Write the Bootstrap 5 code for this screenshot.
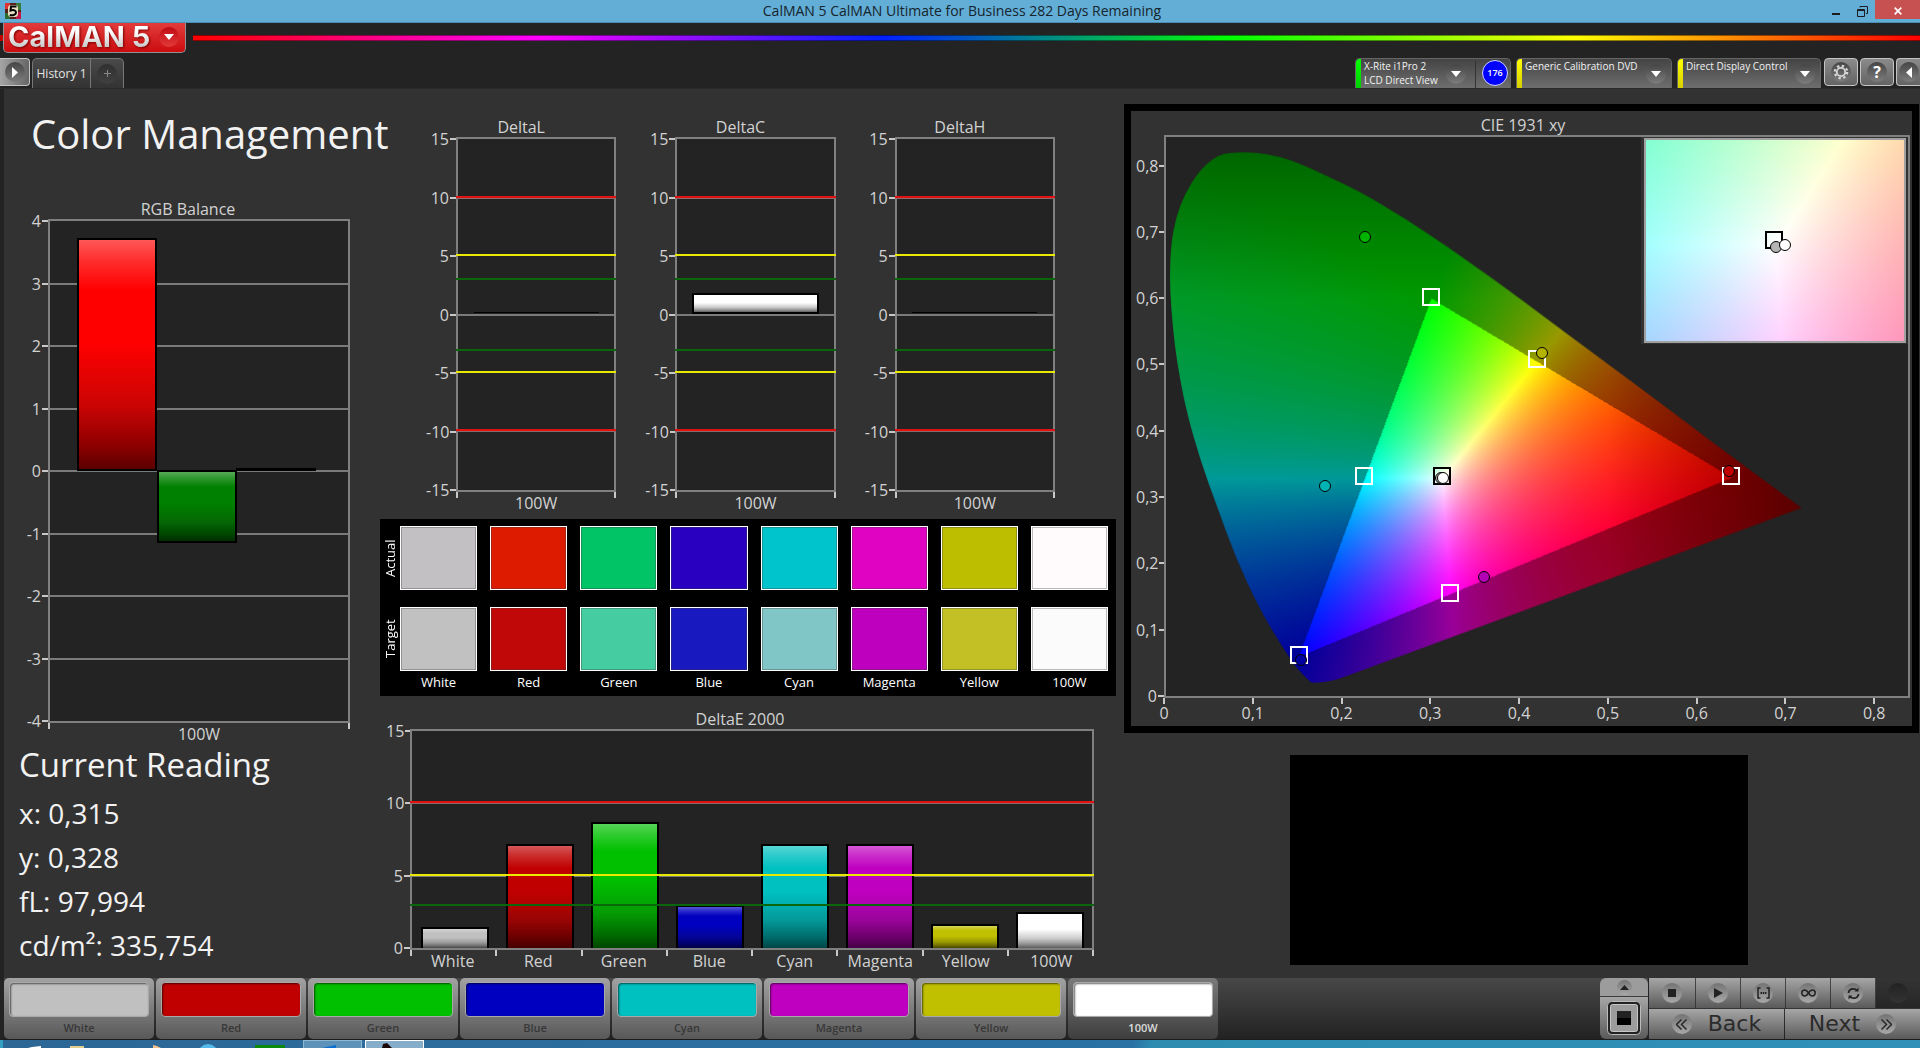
<!DOCTYPE html>
<html lang="en">
<head>
<meta charset="utf-8">
<meta name="viewport" content="width=device-width, initial-scale=1">
<title>CalMAN 5</title>
<link href="https://cdn.jsdelivr.net/npm/bootstrap@5.3.0/dist/css/bootstrap.min.css" rel="stylesheet">
<style>
  body { font-family: "Open Sans", "Noto Sans", sans-serif; background: #323232; color: #d2d2d2; font-size: 16px; line-height: 20px; }
  button { font-family: inherit; }
  .titlebar { height: 23px; background: #62aed6; border-bottom: 1px solid #4b8fb4; color: #16242c; font-size: 14px; }
  .titlebar .app-icon { width: 16px; height: 16px; margin-left: 5px; }
  .titlebar .caption-text { padding-left: 80px; }
  .win-btn { border: 0; background: transparent; height: 19px; width: 26px; padding: 0; color: #1c1c1c; }
  .win-close { background: #c75050; width: 45px; color: #fff; }

  .topbar { height: 66px; background: #232323; border-bottom: 1px solid #2a2a2a; }
  .brand-row { height: 35px; gap: 7px; }
  .brand-lead { width: 3px; margin: 12px -7px 0 0; height: 6px; background: #c40000; }
  .brand { width: 183px; height: 30px; padding: 0 0 2px 4px; border: 1px solid #909090; border-top: 0; border-radius: 0 0 5px 5px; background: linear-gradient(#e23c3c, #cc0c0f); }
  .brand-name { font-family: Inter, "Liberation Sans", sans-serif; font-weight: 700; font-size: 29px; line-height: 28px; color: transparent; background: linear-gradient(#fff 30%, #c9c9c9 85%); -webkit-background-clip: text; background-clip: text; filter: drop-shadow(1px 1px 1px #7a0000); white-space: nowrap; flex: 1 1 0; text-align: left; }
  .brand-arrow { width: 20px; height: 20px; border-radius: 50%; background: linear-gradient(#c00a14, #e23a3a); margin-right: 6px; }
  .spectrum { height: 6px; margin-top: 12px; border: 1px solid #00000070; border-width: 1px 0; background: linear-gradient(90deg, #f00 0, #f0f 20%, #0020ff 40%, #0f0 60%, #ff0 80%, #f00 100%); }
  .round-knob { width: 20px; height: 20px; border-radius: 50%; background: linear-gradient(#454545, #7d7d7d); flex: none; display: flex; align-items: center; justify-content: center; }
  .metal { border: 1px solid #c4c4c4; border-radius: 4px; background: linear-gradient(#8b8b8b, #646464); padding: 0; height: 28px; width: 34px; display: flex; align-items: center; justify-content: center; margin-left: 2px; }
  .metal-open { width: 30px; margin-left: 0; border-left: 0; border-radius: 0 4px 4px 0; background: linear-gradient(90deg, #a5a5a5, #666); }
  .metal-cut { width: 24px; border-right: 0; border-radius: 4px 0 0 4px; }
  .htab { height: 30px; border: 1px solid #777; border-bottom: 0; background: linear-gradient(#4a4a4a, #333); color: #e4e4e4; font-size: 12px; padding: 0; }
  .htab-name { width: 59px; border-radius: 5px 0 0 0; margin-left: 2px; }
  .htab-add { width: 33px; border-left: 0; border-radius: 0 5px 0 0; color: #8a8a8a; }
  .htab-add .round-knob { background: linear-gradient(#303030, #404040); }
  .source { height: 30px; border: 1px solid #666; border-bottom: 0; border-radius: 5px 5px 0 0; background: linear-gradient(#444, #6e6e6e); color: #f2f2f2; font-size: 10px; font-weight: 500; line-height: 14px; padding: 0; text-align: left; overflow: hidden; display: flex; width: 156px; margin-right: 5px; }
  .source-last { width: 144px; margin-right: 1px; }
  .source .strip { width: 5px; align-self: stretch; background: linear-gradient(#ff0, #d6cf00); flex: none; }
  .source .strip.ok { background: linear-gradient(#0f0, #00d200); }
  .source .txt { padding-left: 3px; flex: 1 1 0; min-width: 0; white-space: nowrap; }
  .source .round-knob { align-self: center; margin-right: 5px; }
  .count { width: 26px; height: 26px; border-radius: 50%; border: 1px solid #cfd3ff; background: #00f; color: #fff; font-size: 9px; font-weight: 600; display: flex; align-items: center; justify-content: center; margin: 1px 2px 0 6px; flex: none; }
  .source .rule { width: 1px; background: #333; margin-top: 2px; }

  .workspace { display: grid; grid-template-columns: minmax(0, 376fr) minmax(0, 740fr) minmax(0, 800fr); border-left: 4px solid #232323; }
  .pane-left { padding: 21px 30px 9px 22px; }
  h1.page-name { font-size: 40px; line-height: 48px; font-weight: 400; color: #f2f2f2; margin: 0 0 41px 5px; white-space: nowrap; }
  .reading { color: #f2f2f2; margin: 0 0 0 -7px; }
  .reading h2 { font-size: 33px; line-height: 40px; font-weight: 400; margin: 0 0 8px; }
  .reading p { font-size: 28px; line-height: 40px; margin: 0 0 4px; }

  .chart-title { text-align: center; height: 20px; }
  .yaxis { flex: none; padding: 2px 0; display: flex; flex-direction: column; }
  .yaxis .marks { flex: 1 1 0; display: flex; flex-direction: column; justify-content: space-between; }
  .yaxis .marks div { height: 20px; margin: -10px 0; display: flex; align-items: center; justify-content: flex-end; }
  .yaxis .marks div::after { content: ""; width: 6px; height: 2px; background: #c8c8c8; margin-left: 1px; }
  .plot { flex: 1 1 0; position: relative; border: 2px solid #808080; background: #232323; }
  .gline { position: absolute; left: 0; right: 0; height: 2px; margin-top: -1px; background: #7a7a7a; }
  .limit { position: absolute; left: -2px; right: -2px; height: 2px; margin-top: -2px; }
  .limit-r { background: #e01212; box-shadow: 0 1px #8a6a6a; }
  .limit-y { background: #e8e800; }
  .limit-g { background: #0a660a; margin-top: -1px; }
  .xticks { height: 6px; margin-bottom: -6px; display: flex; justify-content: space-between; }
  .xticks i { width: 2px; background: #c8c8c8; }
  .xlabels { height: 22px; display: flex; line-height: 22px; text-align: center; }
  .xlabels span { flex: 1 1 0; }
  .vbar { border: 2px solid #000; background-image: linear-gradient(rgba(255,255,255,.34), rgba(255,255,255,.18) 9%, rgba(255,255,255,0) 22%, rgba(0,0,0,0) 45%, rgba(20,20,20,.22) 72%, rgba(0,0,0,.42) 88%, rgba(0,0,0,.64)); }
  .slots { position: absolute; inset: 0; display: flex; align-items: flex-end; justify-content: space-around; }
  .slots .vbar { width: 10%; border-bottom: 0; }
  .w-rgb { width: 22px; } .w-delta { width: 30px; } .w-de { width: 24px; } .w-cie { width: 28px; }
  .ml-rgb { margin-left: 22px; } .ml-delta { margin-left: 30px; } .ml-de { margin-left: 24px; } .ml-cie { margin-left: 28px; }

  .deltas { padding: 28px 65px 5px 46px; gap: 29px; flex: 1 1 0; }
  .chips { background: #000; height: 177px; margin-right: 4px; padding: 7px 8px 0 2px; color: #fff; font-size: 13px; display: grid; grid-template-columns: 5px repeat(8, 1fr); grid-template-rows: 64px 64px 24px; row-gap: 17px; column-gap: 13px; text-align: center; }
  .chips .side { writing-mode: vertical-rl; rotate: 180deg; font-size: 13px; width: 16px; text-align: center; line-height: 16px; }
  .chips .chip { border: 1px solid #fff; box-shadow: inset 0 0 0 1px rgba(60,60,60,.35); }
  .chips .cap { margin-top: -16px; line-height: 20px; }
  .de-pane { height: 282px; padding: 13px 26px 6px 6px; }

  .pane-right { padding: 15px 1px 13px 4px; }
  .cie { background: #323232; border: 7px solid #000; padding: 4px 2px 3px 5px; flex: 1 1 0; }
  .cie canvas { display: block; width: 100%; height: 100%; }
  .pt, .sq { position: absolute; translate: -50% -50%; }
  .pt { width: 12px; height: 12px; border-radius: 50%; border: 1px solid #000; }
  .sq { width: 18px; height: 18px; border: 2px solid #fff; }
  .sq.dark { border-color: #000; }
  .inset-box { position: absolute; top: 0; right: 0; width: 36%; height: 37%; background: #323232; padding: 1px 2px 1px 3px; }
  .inset-in { position: relative; width: 100%; height: 100%; border: 2px solid #a0a0a0; }
  .blackout { background: #000; height: 210px; width: 458px; margin: 22px auto 0; translate: -3px; }
  .cie-x { display: flex; justify-content: space-between; width: 95.2%; padding-top: 6px; height: 25px; }
  .cie-x span { width: 0; display: flex; flex-direction: column; align-items: center; line-height: 18px; }
  .cie-x span::before { content: ""; width: 2px; height: 6px; margin-top: -6px; background: #c8c8c8; flex: none; }

  .bottombar { height: 62px; border-left: 4px solid #232323; border-bottom: 1px solid #1c1c1c; background: linear-gradient(#484848, #222); }
  .patch { width: 150px; margin-right: 2px; border: 0; border-radius: 5px; padding: 4px 5px 0; background: linear-gradient(#a2a2a2, #585858); color: #383838; font-size: 11px; font-weight: 600; line-height: 22px; display: flex; flex-direction: column; }
  .patch i { height: 38px; border-radius: 4px; border: 1px solid #a9a9a9; width: 100%; box-shadow: inset 1px 1px 2px rgba(0,0,0,.6); }
  .patch span { width: 100%; text-align: center; }
  .patch.on { background: linear-gradient(#7a7a7a, #3e3e3e); color: #dcdcdc; }
  .pads { width: 320px; display: grid; grid-template-columns: 48px 272px; }
  .pad-col { display: flex; flex-direction: column; gap: 1px; }
  .pad { border: 0; padding: 0; background: linear-gradient(#a6a6a6, #5a5a5a); display: flex; align-items: center; justify-content: center; color: #2b2b2b; }
  .pad .round-knob { background: linear-gradient(#747474, #a8a8a8); }
  .pad-up { height: 18px; background: #9c9c9c; }
  .pad-up .round-knob { width: 15px; height: 15px; }
  .pad.off { background: linear-gradient(#343434, #262626); }
  .pad.off .round-knob { background: linear-gradient(#222, #333); }
  .pad-top { display: grid; gap: 1px; grid-template-columns: 46px repeat(5, 1fr); height: 30px; }
  .pad-bottom { display: grid; gap: 1px; grid-template-columns: 1fr 1fr; flex: 1 1 0; }
  .pad-nav { font-family: "DejaVu Sans", sans-serif; font-size: 22px; line-height: 30px; gap: 16px; }
  .taskbar { height: 8px; overflow: hidden; background: linear-gradient(100deg, #2c6796 0, #2a72a4 59%, #2d8cb0 60%, #3190b8 100%); }
  .tb-item { width: 59px; margin-right: 3px; border: 1px solid #8db8d4; border-bottom: 0; background: #5d93b8; }
  .tb-item.now { border-color: #fff; background: #86aecb; }
</style>
</head>
<body class="d-flex flex-column min-vh-100 m-0">

<header class="titlebar d-flex align-items-start">
  <svg class="app-icon align-self-center" viewBox="0 0 16 16" aria-hidden="true"><rect width="16" height="16" fill="#5c1f18"/><rect width="5" height="6" fill="#d33"/><rect x="11" width="5" height="7" fill="#3a7a3a"/><rect y="10" width="5" height="6" fill="#2c6a30"/><rect x="11" y="9" width="5" height="7" fill="#c01848"/><rect x="3" y="2" width="10" height="12" rx="3" fill="#e6dcc0"/><path d="M11.500 3.500H6L5.500 7.500C9 6.500 11 7.500 11 9.500S8 13 4.800 12" fill="none" stroke="#000" stroke-width="2"/></svg>
  <div class="caption-text flex-grow-1 text-center align-self-center">CalMAN 5 CalMAN Ultimate for Business 282 Days Remaining</div>
  <button class="win-btn" aria-label="Minimize"><svg width="8" height="14" viewBox="0 0 8 14"><rect y="9" width="8" height="2" fill="#1c1c1c"/></svg></button>
  <button class="win-btn" aria-label="Restore"><svg width="11" height="11" viewBox="0 0 11 11" fill="none" stroke="#1c1c1c"><path d="M.5 3.500h7v7h-7zM.5 4.500h7M3 1.500V.5h7.500v7H9"/></svg></button>
  <button class="win-btn win-close" aria-label="Close"><svg width="8" height="8" viewBox="0 0 8 8" stroke="#fff" stroke-width="1.700"><path d="M.7.700l6.600 6.600M7.300.700L.7 7.300"/></svg></button>
</header>

<div class="topbar">
  <div class="brand-row d-flex align-items-start">
    <div class="brand-lead"></div>
    <button class="brand d-flex align-items-center" aria-label="CalMAN 5 menu"><span class="brand-name">CalMAN 5</span><span class="brand-arrow d-flex align-items-center justify-content-center"><svg width="10" height="6" viewBox="0 0 10 6"><path d="M0 0h10L5 6z" fill="#fff"/></svg></span></button>
    <div class="spectrum flex-grow-1"></div>
  </div>
  <div class="d-flex align-items-start">
    <button class="metal metal-open" aria-label="Open panel"><span class="round-knob"><svg width="6" height="11" viewBox="0 0 6 11"><path d="M0 0l6 5.500L0 11z" fill="#fff"/></svg></span></button>
    <button class="htab htab-name">History 1</button>
    <button class="htab htab-add d-flex align-items-center justify-content-center" aria-label="Add history"><span class="round-knob"><svg width="7" height="7" viewBox="0 0 7 7" stroke="#8a8a8a"><path d="M3.500 0v7M0 3.500h7"/></svg></span></button>
    <div class="flex-grow-1"></div>
    <button class="source"><span class="strip ok"></span><span class="txt">X-Rite i1Pro 2<br>LCD Direct View</span><span class="round-knob"><svg width="10" height="6" viewBox="0 0 10 6"><path d="M0 0h10L5 6z" fill="#fff"/></svg></span><span class="rule align-self-stretch ms-1"></span><span class="count">176</span></button>
    <button class="source"><span class="strip"></span><span class="txt">Generic Calibration DVD</span><span class="round-knob"><svg width="10" height="6" viewBox="0 0 10 6"><path d="M0 0h10L5 6z" fill="#fff"/></svg></span></button>
    <button class="source source-last"><span class="strip"></span><span class="txt">Direct Display Control</span><span class="round-knob"><svg width="10" height="6" viewBox="0 0 10 6"><path d="M0 0h10L5 6z" fill="#fff"/></svg></span></button>
    <button class="metal" aria-label="Settings"><span class="round-knob"><svg width="16" height="16" viewBox="0 0 16 16" fill="none" stroke="#d8d8d8"><circle cx="8" cy="8" r="4.200" stroke-width="1.800"/><circle cx="8" cy="8" r="6.200" stroke-width="2.200" stroke-dasharray="2.400 2.470"/></svg></span></button>
    <button class="metal" aria-label="Help"><span class="round-knob fw-bold text-white">?</span></button>
    <button class="metal metal-cut" aria-label="Collapse"><span class="round-knob"><svg width="6" height="11" viewBox="0 0 6 11"><path d="M6 0L0 5.500 6 11z" fill="#fff"/></svg></span></button>
  </div>
</div>

<main class="workspace flex-grow-1">
  <section class="pane-left d-flex flex-column">
    <h1 class="page-name">Color Management</h1>
    <div class="chart-title">RGB Balance</div>
    <div class="d-flex flex-grow-1">
      <div class="yaxis w-rgb"><div class="marks"><div>4</div><div>3</div><div>2</div><div>1</div><div>0</div><div>-1</div><div>-2</div><div>-3</div><div>-4</div></div></div>
      <div class="plot">
        <div class="gline" style="top:12.500%"></div><div class="gline" style="top:25%"></div><div class="gline" style="top:37.500%"></div><div class="gline" style="top:50%"></div><div class="gline" style="top:62.500%"></div><div class="gline" style="top:75%"></div><div class="gline" style="top:87.500%"></div>
        <div class="vbar position-absolute" style="left:9.200%;width:26.800%;top:3.400%;height:46.600%;background-color:#f00"></div>
        <div class="vbar position-absolute" style="left:35.800%;width:26.800%;top:49.800%;height:14.600%;background-color:#008000"></div>
        <div class="bg-black position-absolute" style="left:62.400%;width:26.800%;top:49.400%;height:.6%"></div>
      </div>
    </div>
    <div class="xticks ml-rgb"><i></i><i></i></div>
    <div class="xlabels ml-rgb"><span>100W</span></div>
    <div class="reading">
      <h2>Current Reading</h2>
      <p>x: 0,315</p><p>y: 0,328</p><p>fL: 97,994</p><p>cd/m²: 335,754</p>
    </div>
  </section>

  <section class="d-flex flex-column">
    <div class="deltas d-flex">
      <div class="d-flex flex-column flex-fill">
        <div class="chart-title">DeltaL</div>
        <div class="d-flex flex-grow-1">
          <div class="yaxis w-delta"><div class="marks"><div>15</div><div>10</div><div>5</div><div>0</div><div>-5</div><div>-10</div><div>-15</div></div></div>
          <div class="plot"><div class="gline" style="top:50%"></div><div class="bg-black position-absolute" style="left:10%;width:80%;top:49.200%;height:.5%"></div>
            <div class="limit limit-r" style="top:16.670%"></div><div class="limit limit-y" style="top:33.330%"></div><div class="limit limit-g" style="top:40%"></div><div class="limit limit-g" style="top:60%"></div><div class="limit limit-y" style="top:66.670%"></div><div class="limit limit-r" style="top:83.330%"></div></div>
        </div>
        <div class="xticks ml-delta"><i></i><i></i></div>
        <div class="xlabels ml-delta"><span>100W</span></div>
      </div>
      <div class="d-flex flex-column flex-fill">
        <div class="chart-title">DeltaC</div>
        <div class="d-flex flex-grow-1">
          <div class="yaxis w-delta"><div class="marks"><div>15</div><div>10</div><div>5</div><div>0</div><div>-5</div><div>-10</div><div>-15</div></div></div>
          <div class="plot"><div class="gline" style="top:50%"></div><div class="vbar position-absolute" style="left:9.500%;width:81%;top:44%;height:6%;background-color:#fff"></div>
            <div class="limit limit-r" style="top:16.670%"></div><div class="limit limit-y" style="top:33.330%"></div><div class="limit limit-g" style="top:40%"></div><div class="limit limit-g" style="top:60%"></div><div class="limit limit-y" style="top:66.670%"></div><div class="limit limit-r" style="top:83.330%"></div></div>
        </div>
        <div class="xticks ml-delta"><i></i><i></i></div>
        <div class="xlabels ml-delta"><span>100W</span></div>
      </div>
      <div class="d-flex flex-column flex-fill">
        <div class="chart-title">DeltaH</div>
        <div class="d-flex flex-grow-1">
          <div class="yaxis w-delta"><div class="marks"><div>15</div><div>10</div><div>5</div><div>0</div><div>-5</div><div>-10</div><div>-15</div></div></div>
          <div class="plot"><div class="gline" style="top:50%"></div><div class="bg-black position-absolute" style="left:10%;width:80%;top:49.200%;height:.5%"></div>
            <div class="limit limit-r" style="top:16.670%"></div><div class="limit limit-y" style="top:33.330%"></div><div class="limit limit-g" style="top:40%"></div><div class="limit limit-g" style="top:60%"></div><div class="limit limit-y" style="top:66.670%"></div><div class="limit limit-r" style="top:83.330%"></div></div>
        </div>
        <div class="xticks ml-delta"><i></i><i></i></div>
        <div class="xlabels ml-delta"><span>100W</span></div>
      </div>
    </div>

    <div class="chips">
      <div class="side">Actual</div>
      <div class="chip" style="background:#c3c0c4"></div><div class="chip" style="background:#dd1b00"></div><div class="chip" style="background:#00c465"></div><div class="chip" style="background:#2a00c0"></div><div class="chip" style="background:#00c4cc"></div><div class="chip" style="background:#e004c2"></div><div class="chip" style="background:#bdbe00"></div><div class="chip" style="background:#fffbfd"></div>
      <div class="side">Target</div>
      <div class="chip" style="background:#c1c1c1"></div><div class="chip" style="background:#c00808"></div><div class="chip" style="background:#45cca0"></div><div class="chip" style="background:#1819be"></div><div class="chip" style="background:#80c6c6"></div><div class="chip" style="background:#be00be"></div><div class="chip" style="background:#c2c024"></div><div class="chip" style="background:#fbfbfb"></div>
      <div></div>
      <div class="cap">White</div><div class="cap">Red</div><div class="cap">Green</div><div class="cap">Blue</div><div class="cap">Cyan</div><div class="cap">Magenta</div><div class="cap">Yellow</div><div class="cap">100W</div>
    </div>

    <div class="de-pane d-flex flex-column">
      <div class="chart-title">DeltaE 2000</div>
      <div class="d-flex flex-grow-1">
        <div class="yaxis w-de"><div class="marks"><div>15</div><div>10</div><div>5</div><div>0</div></div></div>
        <div class="plot">
          <div class="gline" style="top:33.330%"></div><div class="gline" style="top:66.670%"></div>
          <div class="slots">
            <div class="vbar" style="height:9.500%;background-color:#c0c0c0"></div>
            <div class="vbar" style="height:47.800%;background-color:#c00000"></div>
            <div class="vbar" style="height:58.300%;background-color:#00c000"></div>
            <div class="vbar" style="height:19.700%;background-color:#0000c0"></div>
            <div class="vbar" style="height:47.800%;background-color:#00c0c0"></div>
            <div class="vbar" style="height:47.800%;background-color:#c000c0"></div>
            <div class="vbar" style="height:10.900%;background-color:#c0c000"></div>
            <div class="vbar" style="height:16.500%;background-color:#fff"></div>
          </div>
          <div class="limit limit-r" style="top:33.330%"></div><div class="limit limit-y" style="top:66.670%"></div><div class="limit limit-g" style="top:80%"></div>
        </div>
      </div>
      <div class="xticks ml-de"><i></i><i></i><i></i><i></i><i></i><i></i><i></i><i></i><i></i></div>
      <div class="xlabels ml-de"><span>White</span><span>Red</span><span>Green</span><span>Blue</span><span>Cyan</span><span>Magenta</span><span>Yellow</span><span>100W</span></div>
    </div>
  </section>

  <section class="pane-right d-flex flex-column">
    <div class="cie d-flex flex-column">
      <div class="chart-title">CIE 1931 xy</div>
      <div class="d-flex flex-grow-1">
        <div class="yaxis w-cie"><div style="flex:0 0 5.100%"></div><div class="marks"><div>0,8</div><div>0,7</div><div>0,6</div><div>0,5</div><div>0,4</div><div>0,3</div><div>0,2</div><div>0,1</div><div>0</div></div></div>
        <div class="plot" id="ciePlot">
          <div class="position-absolute top-0 start-0 w-100 h-100"><canvas id="locus" width="741" height="557"></canvas></div>
          <div class="inset-box"><div class="inset-in">
            <div class="position-absolute top-0 start-0 w-100 h-100"><canvas id="zoomed" width="258" height="200"></canvas></div>
            <div class="sq dark" style="left:49.500%;top:50%"></div>
            <div class="pt" style="left:50.400%;top:53.500%;background:#b4b4b4"></div>
            <div class="pt" style="left:54%;top:52.300%;background:#fff"></div>
          </div></div>
        </div>
      </div>
      <div class="ml-cie"><div class="cie-x"><span>0</span><span>0,1</span><span>0,2</span><span>0,3</span><span>0,4</span><span>0,5</span><span>0,6</span><span>0,7</span><span>0,8</span></div></div>
    </div>
    <div class="blackout"></div>
  </section>
</main>

<footer>
  <div class="bottombar d-flex">
    <button class="patch"><i style="background:#c0c0c0"></i><span>White</span></button>
    <button class="patch"><i style="background:#c00000"></i><span>Red</span></button>
    <button class="patch"><i style="background:#00c000"></i><span>Green</span></button>
    <button class="patch"><i style="background:#0000c0"></i><span>Blue</span></button>
    <button class="patch"><i style="background:#00c0c0"></i><span>Cyan</span></button>
    <button class="patch"><i style="background:#c000c0"></i><span>Magenta</span></button>
    <button class="patch"><i style="background:#c0c000"></i><span>Yellow</span></button>
    <button class="patch on"><i style="background:#fff"></i><span>100W</span></button>
    <div class="pads ms-auto">
      <div class="pad-col">
        <button class="pad pad-up rounded-top" aria-label="Expand"><span class="round-knob"><svg width="9" height="5" viewBox="0 0 9 5"><path d="M0 5h9L4.500 0z" fill="#222"/></svg></span></button>
        <button class="pad rounded-bottom flex-grow-1" aria-label="Stop pattern"><svg width="34" height="34" viewBox="0 0 34 34"><rect x=".5" y=".5" width="33" height="33" rx="4" fill="#222" stroke="#bbb"/><rect x="3.500" y="3.500" width="27" height="27" rx="2" fill="#9c9c9c" stroke="#c6c6c6"/><rect x="10" y="10" width="14" height="14" fill="#000"/><rect x="10" y="10" width="14" height="7" fill="#222"/></svg></button>
      </div>
      <div class="pad-col border-start border-dark">
        <div class="pad-top">
          <button class="pad" aria-label="Stop"><span class="round-knob"><svg width="8" height="8" viewBox="0 0 8 8"><rect width="8" height="8" fill="#222"/></svg></span></button>
          <button class="pad" aria-label="Play"><span class="round-knob"><svg width="9" height="10" viewBox="0 0 9 10"><path d="M0 0l9 5-9 5z" fill="#222"/></svg></span></button>
          <button class="pad" aria-label="Range"><span class="round-knob"><svg width="13" height="12" viewBox="0 0 13 12" fill="none" stroke="#222" stroke-width="1.500"><path d="M3.500 1H1v10h2.500M9.500 1H12v10H9.500"/><path d="M3.500 6h6" stroke-width="2" stroke-dasharray="1.500 .7"/></svg></span></button>
          <button class="pad" aria-label="Loop"><span class="round-knob"><svg width="15" height="8" viewBox="0 0 15 8" fill="none" stroke="#222" stroke-width="1.500"><path d="M7.500 4C6 1.500 5 1 3.800 1a3 3 0 0 0 0 6C5 7 6 6.500 7.500 4S10 1 11.200 1a3 3 0 0 1 0 6C10 7 9 6.500 7.500 4z"/></svg></span></button>
          <button class="pad" aria-label="Refresh"><span class="round-knob"><svg width="13" height="13" viewBox="0 0 13 13" fill="none" stroke="#222" stroke-width="1.800"><path d="M1.500 6C1.800 3 4 1.800 6.500 1.800c1.500 0 2.500.5 3.500 1.500M11.500 7c-.3 3-2.500 4.200-5 4.200-1.500 0-2.500-.5-3.500-1.500"/><path d="M11.500.5v4h-4zM1.500 12.500v-4h4z" fill="#222" stroke="none"/></svg></span></button>
          <button class="pad off" aria-label="Record"><span class="round-knob"></span></button>
        </div>
        <div class="pad-bottom">
          <button class="pad pad-nav"><span class="round-knob"><svg width="11" height="11" viewBox="0 0 11 11" fill="none" stroke="#222" stroke-width="1.400"><path d="M5.500.5l-5 5 5 5M10.500.5l-5 5 5 5"/></svg></span>Back</button>
          <button class="pad pad-nav">Next<span class="round-knob"><svg width="11" height="11" viewBox="0 0 11 11" fill="none" stroke="#222" stroke-width="1.400"><path d="M.5.5l5 5-5 5M5.500.5l5 5-5 5"/></svg></span></button>
        </div>
      </div>
    </div>
  </div>
  <div class="taskbar d-flex">
    <svg width="303" height="8" viewBox="0 0 303 8" aria-hidden="true"><rect width="3" height="8" fill="#35a0c4"/><path d="M28 8l4-1 9-1v2z" fill="#fff"/><path d="M70 6h14v2H70z" fill="#e5cf8f"/><path d="M153 5l4 1 4 2h-8z" fill="#f0c08a"/><circle cx="208" cy="14" r="10" fill="#54b9ea"/><rect x="255" y="5" width="30" height="3" fill="#0b8a0b"/></svg>
    <div class="tb-item"><svg class="d-block" width="57" height="7" viewBox="0 0 57 7" aria-hidden="true"><path d="M18 7l14-3v3z" fill="#0a6fd0"/></svg></div>
    <div class="tb-item now"><svg class="d-block" width="57" height="7" viewBox="0 0 57 7" aria-hidden="true"><path d="M16 7l1-4 4-1 5 5z" fill="#1a0808"/></svg></div>
  </div>
</footer>

<script src="https://cdn.jsdelivr.net/npm/bootstrap@5.3.0/dist/js/bootstrap.bundle.min.js"></script>
<script>
  // Axis span of the chromaticity plot
  const XMAX = 0.84, YMAX = 0.843;

  // Brightest displayable linear RGB for an xy pair
  function xyToRgb(x, y) {
    const X = x / y, Z = (1 - x - y) / y;
    let c = [
      3.2406 * X - 1.5372 - 0.4986 * Z,
      -0.9689 * X + 1.8758 + 0.0415 * Z,
      0.0557 * X - 0.2040 + 1.0570 * Z
    ];
    const inside = Math.min(...c) >= 0;
    c = c.map(v => Math.max(v, 0));
    const m = Math.max(...c);
    return { rgb: c.map(v => v / m), inside };
  }

  const outline = [[.165,.02],[.18,.02],[.197,.0265],[.7196,.2836],[.64,.361],[.548,.4538],[.4387,.561],[.3725,.6276],[.3005,.694],[.237,.748],[.197,.7756],[.151,.8033],[.1278,.8138],[.102,.82],[.073,.82],[.0587,.815],[.047,.8033],[.0357,.788],[.0213,.757],[.0115,.723],[.0058,.683],[.004,.634],[.0058,.5845],[.0098,.529],[.0155,.4797],[.0242,.4242],[.0386,.3564],[.0587,.2824],[.0789,.2084],[.1048,.1344],[.1278,.082],[.148,.0419],[.1623,.0222]];

  function paint(canvas, x0, x1, y0, y1, shade) {
    const w = canvas.width, h = canvas.height;
    const off = document.createElement('canvas');
    off.width = w; off.height = h;
    const o = off.getContext('2d'), img = o.createImageData(w, h);
    for (let j = 0; j < h; j++) for (let i = 0; i < w; i++) {
      const x = x0 + (x1 - x0) * i / w, y = Math.max(y1 - (y1 - y0) * j / h, 0.001);
      const r = xyToRgb(x, y), k = 255 * shade(x, y, r.inside), p = (j * w + i) * 4;
      for (let n = 0; n < 3; n++) img.data[p + n] = r.rgb[n] * k;
      img.data[p + 3] = 255;
    }
    o.putImageData(img, 0, 0);
    return off;
  }

  const locus = document.getElementById('locus'), g = locus.getContext('2d');
  const P = outline.map(([x, y]) => [x / XMAX * locus.width, (1 - y / YMAX) * locus.height]);
  g.beginPath();
  g.moveTo(...P[0]);
  g.quadraticCurveTo(...P[1], ...P[2]);
  g.lineTo(...P[3]);
  for (let i = 4; i < P.length - 1; i++) {
    g.quadraticCurveTo(P[i][0], P[i][1], (P[i][0] + P[i + 1][0]) / 2, (P[i][1] + P[i + 1][1]) / 2);
  }
  g.quadraticCurveTo(...P[P.length - 1], ...P[0]);
  g.closePath();
  g.clip();
  g.drawImage(paint(locus, 0, XMAX, 0, YMAX, (x, y, inside) =>
    (inside ? 1 : 0.6) * (x > 0.5 ? 1 - (x - 0.5) * 1.9 : 1) * (y > 0.6 ? 1 - (y - 0.6) * 1.5 : 1)), 0, 0);

  const z = document.getElementById('zoomed');
  z.getContext('2d').drawImage(paint(z, .2860, .3390, .3085, .3515, () => 1), 0, 0);

  // Target squares and measured points
  const plot = document.getElementById('ciePlot');
  const put = (cls, x, y, bg) => {
    const e = document.createElement('div');
    e.className = cls;
    e.style.left = x / XMAX * 100 + '%';
    e.style.top = (1 - y / YMAX) * 100 + '%';
    if (bg) e.style.background = bg;
    plot.append(e);
  };
  [[.3,.602],[.42,.508],[.2245,.332],[.64,.332],[.321,.156],[.15,.062]].forEach(s => put('sq', s[0], s[1]));
  put('sq dark', .3127, .332);
  [[.2257,.692,'#00b400'],[.4255,.518,'#b4b400'],[.1795,.317,'#00b4b4'],[.6375,.339,'#c00000'],[.36,.18,'#b400b4'],[.153,.054,'#0000a0'],[.311,.3295,'#b4b4b4'],[.3135,.3295,'#fff']].forEach(s => put('pt', ...s));
</script>
</body>
</html>
